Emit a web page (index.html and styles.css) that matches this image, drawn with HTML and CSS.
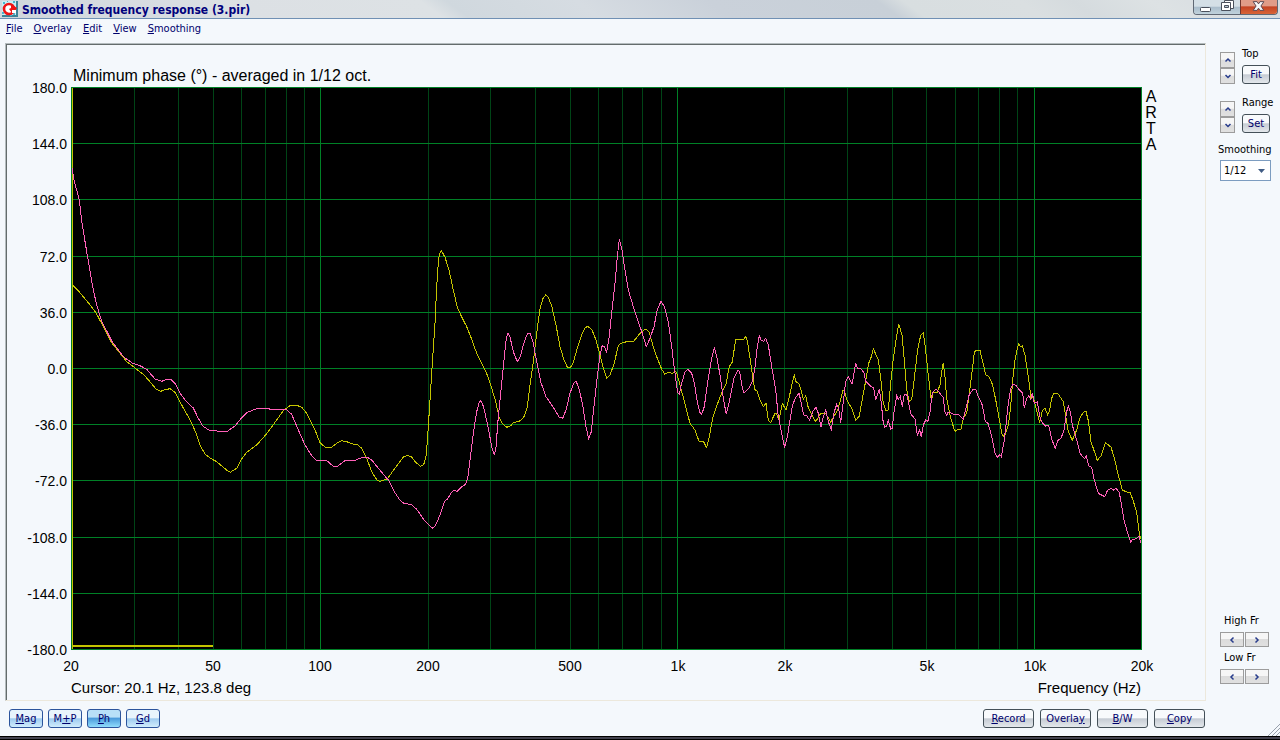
FILE: index.html
```html
<!DOCTYPE html>
<html lang="en">
<head>
<meta charset="utf-8">
<title>Smoothed frequency response (3.pir)</title>
<link rel="stylesheet" href="styles.css">
</head>
<body>
<div class="window">
  <header class="titlebar">
    <svg class="app-icon" viewBox="0 0 16 16" aria-hidden="true">
      <rect width="16" height="16" fill="#3c8296"/>
      <path d="M0 0h14v14H0z" fill="#c8eef4"/>
      <path d="M1 1h2v2H1zM11 0h2v2h-2zM0 11h2v2H0zM11 12h2v2h-2zM5 0h1v1H5zM8 14h2v1H8z" fill="#4cb4cc"/>
      <circle cx="7" cy="8" r="5" fill="#fff" stroke="#f01414" stroke-width="2.6"/>
      <path d="M9 3l6 4-2 3-3-1v3L7 8l2-1z" fill="#f01414"/>
      <path d="M10 9h4v3h-4z" fill="#fff"/>
    </svg>
    <h1 class="title">Smoothed frequency response (3.pir)</h1>
    <div class="window-controls">
      <button class="win-btn" aria-label="Minimize"><svg viewBox="0 0 23 14"><rect x="6.500" y="7.500" width="10" height="4" rx="1" fill="#fff" stroke="#4a505c"/></svg></button>
      <button class="win-btn win-restore" aria-label="Restore"><svg viewBox="0 0 23 14"><path d="M7.500 0.500h9v8h-9z" fill="#fff" stroke="#4a505c"/><path d="M4.500 2.500h9v8h-9z" fill="#fff" stroke="#4a505c"/><path d="M7.500 5.500h4v2h-4z" fill="#b8c8d4" stroke="#4a505c"/></svg></button>
      <button class="win-btn win-close" aria-label="Close"><svg viewBox="0 0 37 14"><path d="M12.500 1.500h4l1.500 2.300 1.500-2.300h4l-3 4.500 3 4.500h-4L18 8.200l-1.500 2.300h-4l3-4.500z" fill="#f6f6f8" stroke="#5a4650"/></svg></button>
    </div>
  </header>
  <nav class="menu">
    <a href="#file"><u>F</u>ile</a>
    <a href="#overlay"><u>O</u>verlay</a>
    <a href="#edit"><u>E</u>dit</a>
    <a href="#view"><u>V</u>iew</a>
    <a href="#smoothing"><u>S</u>moothing</a>
  </nav>
  <main class="workspace">
    <section class="panel">
      <svg class="chart" viewBox="7 45 1198 655" role="img" aria-label="Minimum phase chart">
        <rect class="plot-bg" x="71" y="87" width="1071" height="563"/>
        <path class="grid-minor" d="M134.500 87v563M178.500 87v563M213.500 87v563M241.500 87v563M265.500 87v563M286.500 87v563M304.500 87v563M428.500 87v563M490.500 87v563M535.500 87v563M570.500 87v563M598.500 87v563M622.500 87v563M642.500 87v563M661.500 87v563M784.500 87v563M847.500 87v563M892.500 87v563M926.500 87v563M955.500 87v563M978.500 87v563M999.500 87v563M1017.500 87v563"/>
        <path class="grid-major" d="M320.500 87v563M677.500 87v563M1034.500 87v563M71 143.500h1071M71 199.500h1071M71 256.500h1071M71 312.500h1071M71 368.500h1071M71 424.500h1071M71 480.500h1071M71 537.500h1071M71 593.500h1071M71.500 87.500h1070v562h-1070z"/>
        <path class="cursor" d="M72.500 88v561"/>
        <path class="marker" d="M72 646h141"/>
        <polyline class="trace-yellow" points="72,284.700 80,292.700 90,304.700 96,312.700 103.300,326.700 111.700,342.700 126.700,361.700 135,368 143.300,374.300 150,381.700 156,389 160.700,391.300 165,389.700 170,388.700 175,392.300 183.300,408 188.300,416.700 193.300,426.700 196.700,435 200,445 205,454 210,458 216.700,461.700 223.300,467.300 227.700,471 230.300,472.300 236.700,468.300 241.700,459 246.700,452.300 256.700,445 265,435.700 273.300,424.700 283.300,410.700 290,405.700 296.700,405.300 301.700,407.300 306.700,413.300 315,430 320,442.700 325,447 328.300,447.700 331.700,447.300 336.700,443.300 341.700,440.700 346.700,441.700 355,444.700 357.300,444.300 361.700,448.300 366.700,458.300 371.700,471.700 376.700,479.700 380,481.300 387.300,478.700 395,468.300 403.300,457 407.700,455.300 411.700,457 416,462.700 420.700,466.300 423.700,464.700 426.300,455 428.300,426.700 430,400 432.300,363.300 435,323.300 436.700,286.700 438,266.700 439.300,254 441.300,250.300 445,257.300 449,270 453.300,290 457.300,307.300 461.700,317 466.700,326.700 471.700,339.300 476.700,353.300 481.700,363 488.300,377.300 491.700,388.300 495.700,401.700 499,416.700 502.300,423.300 506.700,427.300 510.700,425.700 513.300,422.700 520.700,420.700 524.300,416 527.300,406.700 530,385 532.700,366.700 535.300,345 537.300,328.300 540,309.300 542.700,299 545.700,295 548.300,297.300 551.700,306 556,325 560,346.700 564,360 567.300,367 569.700,368 572.700,364.300 577.300,348.300 581.700,335 585,328 587.700,326.300 591.700,329.300 596,340 600,355 603.300,368.300 606.700,378.300 610,375 614,364 618.300,346 620.700,343.300 626.700,341.700 634,341 639.300,334 644,330 646,329 649,332 653.300,346.700 656.700,356.700 661.700,369.300 664.700,374 668.300,372.300 672.700,373.300 675.700,371.300 676.700,372.700 680,385 684,400 690,423.300 695,430 699.300,442 703.300,441.300 706.700,447.700 709.300,436.700 712.700,418.300 717.300,404.300 721.700,393 726,384 729.300,366.700 732.300,362 735.700,339.300 738.300,340 744,339 745.700,336.700 747.300,340.700 750,358.300 752.700,376.700 754.700,389.300 757.300,391.300 760,400 763.300,406.700 766,403.300 768.300,420 770.700,422.700 775,413.300 776.700,414 779,420 782.300,403.300 786,410 789,398.300 792.300,382.700 794.300,375.300 796,381.700 799.300,384 803.300,399 805.700,396 808.300,407.700 812.700,416.700 815.700,421.700 820.700,413.300 826,414 830.700,422 833.300,417.300 837.700,410 840,401.700 843,390 844.300,391 847.300,401 851.700,408.300 855.700,420.300 859.300,416 862.700,396.700 866,379.300 868.700,363.300 871.700,355.700 873.300,348.700 878.300,360 880.700,378.300 883.300,403.300 886,411 888.300,410 890.700,383.300 893.300,358.300 896.300,338.300 898.700,323.700 902,335 904.300,360 906.700,390 909.300,401.300 911.700,399.300 914.700,375 917.700,349.300 920.700,335.300 923.300,332.700 925.300,346.700 927.700,370 930,390 931.300,400.700 933.300,392 937.300,392 940,385 941.700,371.700 943.300,362.700 945,376.700 946.700,398.300 950,415 954.300,430 955.700,431.300 958,429 960.700,430 963.300,418.300 966.700,413.300 970,388.300 972.300,370 974.300,352.300 976,350.300 980,350.300 982.700,361.700 985.700,374.700 989,376.700 992.700,385 996.700,405 1000,423.300 1002,434 1004.300,437.700 1008.300,425 1010.700,406.700 1012.700,380 1015,360 1017.700,346.700 1018.700,343.700 1020.300,346.700 1022.300,346 1025,355 1028.300,376.700 1031,398.300 1033.300,397 1037.300,413.300 1039.700,422.700 1042.300,411 1045,408.300 1047.700,414.700 1049.300,411.700 1051.700,398.300 1053.700,393.300 1057.700,393.300 1063.300,401.700 1066,418.300 1068.300,431.300 1072.300,440.300 1076.700,430 1080,417.700 1083.300,412.300 1086,411.300 1088.300,420.700 1091,441.700 1095,453.300 1097.300,460.300 1101,456 1105.300,442.700 1111,447 1114.300,458.300 1118.300,475 1122.300,490 1126.700,492 1130.300,492.700 1133.300,501 1136.700,512.700 1139.300,533.300 1140.700,539.300"/>
        <polyline class="trace-pink" points="72,168.300 74,180 79.300,200 82,223.300 86.700,251.700 93.300,290 96.700,305 101.700,321.700 108.300,334 111.700,341 123.300,356.700 132.700,363.300 140,365.700 146.700,369.300 155,379 161.700,381.300 166.700,379.300 171,379.700 175,383.300 180,393.300 186,401 193.300,408 198.300,418.300 202.700,426 209.300,430.300 220,431.300 227.300,431.300 235,426 241.700,417.700 247.300,412.300 256.700,408.700 268.300,408.700 270.700,409.300 286,409.300 291.700,414.300 298.300,430 305,445 311.700,455.700 316.700,460.500 326.700,460.500 333.300,466.300 337.300,466.300 345,460.700 353.300,461 361.700,457.700 367.300,457.300 371.700,460 378.300,468.300 388.300,480 395,492.700 400,500.300 404.300,503.700 411,504.300 416.700,509.300 425,521.300 432.700,528.300 435.300,526 440,515 444.300,501.700 447.700,498.700 451.700,492 454,490.300 457.300,491.300 461.700,486.700 465.700,484.300 467.700,478.300 470,460 473.300,433.300 476.700,411.700 479.300,402 480.700,400.700 483.300,406 487.700,425 491.700,446.700 494.300,455.300 496,446.700 498.300,416.700 501.700,383.300 504.300,356.700 506.300,338.300 508,333.300 510,337 513.300,351.700 517.300,361.700 520,357.300 524.300,341.700 527.700,333 530,333 533.300,343.300 536.700,361.700 540.700,381.700 546,396.700 555,410 559.300,417.300 562.700,418.300 566,410 570,393.300 574,382.700 576,381.300 578.700,387.300 582.700,405 586,426.700 588.700,438.700 591.300,431.700 594.300,403.300 597.700,373.300 600,355 602.300,345.300 604.300,346.700 606.700,352.300 609,338.300 612,310 615,283.300 617.300,256.700 619.300,239.300 621.700,248.300 625,270 628.300,290 633.300,306.700 638.300,321.700 642.300,333.300 646.300,346.700 650,338.300 654,326.700 657.300,310 661,301.300 664.300,306.700 668.300,321.700 671.700,346.700 674.300,368.300 677.700,392.700 679.300,394 681.700,383.300 685,371.700 687.700,369.300 691.700,373.300 694.300,382.700 697.300,401.700 700,412.700 701.700,414.300 704.300,406.700 707.300,385 711,361.700 714.300,347.300 716.700,356.700 720,375 723.300,398.300 726.300,414.300 729.300,401.700 734,378.300 737.700,370.300 739.700,371.700 741.700,385 744,393.300 749.300,387.700 752.700,380.700 755,366.700 757.300,346.700 759.300,335.700 761,340 763.700,341.300 765.700,338.300 768.300,345 771.700,366.700 775.700,390 778.300,416.700 782.700,438.300 784.700,447.700 787.700,435 790,420 792.700,404.300 796,397.300 799,393 801,401.700 803.700,415 806.700,415.700 809.700,420.300 812.700,411.700 816,407.300 818.300,413.300 821,426.700 823.300,416.700 825.700,410 828.300,421.700 831.300,429.300 834.300,411.700 836.700,404.300 838.700,408.300 840.700,422.700 843.300,401.700 845.700,381.700 848.300,376.700 852,384 854,373.300 855.700,362.700 857.300,368 861.700,369.300 864,373.300 866,381.700 870,385.700 873.700,388 875.700,400 879.300,388.700 881.300,403.300 883.300,423.300 884.700,427.300 886.700,426 888.300,420.300 890.700,429 892.300,428.300 894,411.700 896.700,395.700 898.300,399.300 900.300,396.300 902.300,406.700 904.300,394 906.700,394 909,405 911,414.300 915,419 917.300,435.300 919.700,430 921.300,436.700 923.300,425 925.700,420 927.700,422 930,411.700 932.300,392.700 936,389.300 939,392 943.300,397.700 945,411.700 946.700,415.300 948.300,412 953.300,414 959,415 963.300,419 966,408.300 969.300,394.300 973.300,389.300 975.700,389.300 978.300,396.700 982.300,405 985.300,421.300 988,423.300 991.700,436 995,453.300 997.300,457.300 1000,454.700 1001.300,456.700 1004,441.700 1006,425 1008.300,403.300 1010.700,388.300 1012.700,384.300 1016,385.300 1019.300,390 1022.700,393.300 1024.300,408.300 1026.300,399.300 1028.700,395.700 1030.700,399.300 1032.300,392.700 1034.300,403.300 1037.300,401.700 1040,417.300 1042.300,422.700 1045.700,426 1048.700,425.300 1052,440 1055.300,448.300 1057.700,440.700 1061,438.300 1064,430 1066.700,411.700 1068.300,405.700 1070.300,411.700 1072.300,425 1076.700,440 1080,453.300 1084.300,458.700 1086.300,456 1088.700,465.700 1091.700,467.300 1094.300,480 1098.300,493.300 1104.700,496.700 1107.700,490 1111,488.300 1114,490.300 1116,488.300 1119.300,492.700 1121.300,503.300 1124,520 1127.300,531.700 1130.700,542.300 1132,539.700 1136,538.700 1139,536 1140.700,543.300"/>
        <text class="chart-title" x="73" y="81">Minimum phase (°) - averaged in 1/12 oct.</text>
        <g class="axis-y">
          <text x="67" y="93">180.0</text>
          <text x="67" y="149">144.0</text>
          <text x="67" y="205">108.0</text>
          <text x="67" y="262">72.0</text>
          <text x="67" y="318">36.0</text>
          <text x="67" y="374">0.0</text>
          <text x="67" y="430">-36.0</text>
          <text x="67" y="486">-72.0</text>
          <text x="67" y="543">-108.0</text>
          <text x="67" y="599">-144.0</text>
          <text x="67" y="655">-180.0</text>
        </g>
        <g class="axis-x">
          <text x="71" y="671">20</text>
          <text x="213" y="671">50</text>
          <text x="320" y="671">100</text>
          <text x="428" y="671">200</text>
          <text x="570" y="671">500</text>
          <text x="678" y="671">1k</text>
          <text x="785" y="671">2k</text>
          <text x="927" y="671">5k</text>
          <text x="1035" y="671">10k</text>
          <text x="1142" y="671">20k</text>
        </g>
        <g class="brand">
          <text x="1151" y="102">A</text>
          <text x="1151" y="118">R</text>
          <text x="1151" y="134">T</text>
          <text x="1151" y="150">A</text>
        </g>
        <text class="note" x="71" y="693">Cursor: 20.1 Hz, 123.8 deg</text>
        <text class="note note-end" x="1141" y="693">Frequency (Hz)</text>
      </svg>
    </section>
    <aside class="side">
      <div class="side-top">
        <div class="adjust">
          <div class="spinner">
            <button class="arrow" aria-label="Top up"><svg viewBox="0 0 8 8"><path d="M1.500 5.500L4 3l2.500 2.500"/></svg></button>
            <button class="arrow" aria-label="Top down"><svg viewBox="0 0 8 8"><path d="M1.500 3L4 5.500 6.500 3"/></svg></button>
          </div>
          <div class="adjust-main"><span>Top</span><button class="btn">Fit</button></div>
        </div>
        <div class="adjust">
          <div class="spinner">
            <button class="arrow" aria-label="Range up"><svg viewBox="0 0 8 8"><path d="M1.500 5.500L4 3l2.500 2.500"/></svg></button>
            <button class="arrow" aria-label="Range down"><svg viewBox="0 0 8 8"><path d="M1.500 3L4 5.500 6.500 3"/></svg></button>
          </div>
          <div class="adjust-main"><span>Range</span><button class="btn">Set</button></div>
        </div>
        <div class="smoothing">
          <label for="smoothing">Smoothing</label>
          <div class="select-wrap">
            <select id="smoothing"><option>1/12</option></select>
            <svg class="caret" viewBox="0 0 7 4" aria-hidden="true"><path d="M0 0h7L3.500 4z"/></svg>
          </div>
        </div>
      </div>
      <div class="side-bottom">
        <span>High Fr</span>
        <div class="pair">
          <button class="arrow" aria-label="High frequency down"><svg viewBox="0 0 8 8"><path d="M5.500 1.500L3 4l2.500 2.500"/></svg></button>
          <button class="arrow" aria-label="High frequency up"><svg viewBox="0 0 8 8"><path d="M2.500 1.500L5 4 2.500 6.500"/></svg></button>
        </div>
        <span>Low Fr</span>
        <div class="pair">
          <button class="arrow" aria-label="Low frequency down"><svg viewBox="0 0 8 8"><path d="M5.500 1.500L3 4l2.500 2.500"/></svg></button>
          <button class="arrow" aria-label="Low frequency up"><svg viewBox="0 0 8 8"><path d="M2.500 1.500L5 4 2.500 6.500"/></svg></button>
        </div>
      </div>
    </aside>
  </main>
  <footer class="toolbar">
    <div class="views">
      <button class="btn btn-view"><u>M</u>ag</button>
      <button class="btn btn-view">M<u>+</u>P</button>
      <button class="btn btn-view btn-active"><u>P</u>h</button>
      <button class="btn btn-view"><u>G</u>d</button>
    </div>
    <div class="actions">
      <button class="btn"><u>R</u>ecord</button>
      <button class="btn">Overla<u>y</u></button>
      <button class="btn"><u>B</u>/W</button>
      <button class="btn"><u>C</u>opy</button>
    </div>
    <svg class="grip" viewBox="0 0 12 12" aria-hidden="true"><path d="M0 12L12 0M4 12l8-8M8 12l4-4"/></svg>
  </footer>
</div>
</body>
</html>
```
FILE: styles.css
```css
* {
  box-sizing: border-box;
}

body {
  margin: 0;
  background: #f4f8fc;
  color: #000;
  font: 11px/14px "DejaVu Sans Condensed", "DejaVu Sans", sans-serif;
}

.window {
  display: flex;
  flex-direction: column;
  min-height: 100vh;
}

.window::after {
  content: "";
  height: 4px;
  background: linear-gradient(#000 0 25%, #42424e 25% 75%, #000 75%);
}

.titlebar {
  display: flex;
  align-items: center;
  gap: 4px;
  height: 19px;
  padding-left: 2px;
  border-bottom: 1px solid #7090b4;
  background: linear-gradient(36deg, #cfd6dc, #dce0e4 20%, #dde2e5 34%, #d0d8de 36%, #d6dce2 46%, #cad1da 56%, #c8d0d8 69%, #d8dee0 71%, #dadfe1 80%, #d5dbde 84%, #dde2e4 90%, #d6dbe0);
}

.app-icon {
  width: 16px;
  height: 16px;
}

.title {
  flex: 1;
  margin: 0;
  padding-top: 1px;
  color: #00007c;
  font-size: 12px;
  line-height: 18px;
}

.window-controls {
  display: flex;
  align-self: flex-start;
  margin-right: 2px;
  border: 1px solid #606874;
  border-top: 0;
  border-radius: 0 0 4px 4px;
  overflow: hidden;
}

.win-btn {
  width: 23px;
  height: 14px;
  padding: 0;
  border: 0;
  background: linear-gradient(#d4dfe6 45%, #a9bccb 50%, #c0d2dc);
}

.win-btn svg {
  display: block;
  width: 100%;
  height: 100%;
}

.win-close {
  width: 37px;
  border-left: 1px solid #703830;
  background: linear-gradient(#e09c88 40%, #c44424 50%, #d86438);
}

.menu {
  display: flex;
  gap: 11px;
  height: 24px;
  padding: 3px 6px;
}

.menu a {
  color: #00006c;
  text-decoration: none;
}

u {
  text-underline-offset: 1px;
}

.workspace {
  display: grid;
  grid-template-columns: 1fr 74px;
  flex: 1;
}

.panel {
  margin-left: 5px;
  padding: 1px 0 0 1px;
  border: 1px solid #ece8dc;
  border-top-color: #b4bcbe;
  border-left-color: #b4bcbe;
  box-shadow: inset 1px 1px 0 #646c6c;
}

.chart {
  display: block;
  width: 100%;
  font-family: "Liberation Sans", Arial, sans-serif;
  font-size: 14px;
}

.plot-bg {
  fill: #000;
}

.grid-minor,
.grid-major,
.cursor,
.marker,
.trace-yellow,
.trace-pink {
  fill: none;
  shape-rendering: crispEdges;
}

.grid-minor {
  stroke: #004416;
}

.grid-major {
  stroke: #008026;
}

.cursor,
.marker,
.trace-yellow {
  stroke: #c4c400;
}

.marker {
  stroke-width: 2px;
}

.trace-pink {
  stroke: #ff60b8;
}

.chart-title,
.brand {
  font-size: 16px;
}

.note {
  font-size: 15px;
}

.axis-y,
.note-end {
  text-anchor: end;
}

.axis-x,
.brand {
  text-anchor: middle;
}

.side {
  display: flex;
  flex-direction: column;
  justify-content: space-between;
  padding: 4px 0 17px 14px;
}

.side-top {
  display: flex;
  flex-direction: column;
  gap: 12px;
}

.adjust {
  display: flex;
  align-items: flex-end;
  gap: 7px;
}

.adjust-main {
  display: flex;
  flex-direction: column;
  gap: 4px;
}

.adjust-main .btn {
  width: 28px;
  padding: 0;
}

.spinner {
  display: flex;
  flex-direction: column;
}

.arrow {
  display: flex;
  align-items: center;
  justify-content: center;
  width: 15px;
  height: 16px;
  padding: 0;
  border: 1px solid #9c9c9c;
  background: linear-gradient(#f6f6f6 45%, #dcdcdc 50%, #e0e0e0);
}

.arrow svg {
  width: 8px;
  height: 8px;
  fill: none;
  stroke: #283c8c;
  stroke-width: 1.5;
}

.smoothing {
  display: flex;
  flex-direction: column;
  gap: 3px;
  margin-top: -2px;
  margin-left: -2px;
}

.select-wrap {
  display: grid;
  align-items: center;
  width: 51px;
  margin-left: 2px;
}

.select-wrap select,
.caret {
  grid-area: 1 / 1;
}

.select-wrap select {
  appearance: none;
  width: 100%;
  height: 21px;
  padding: 0 3px;
  border: 1px solid #7c9cc0;
  border-radius: 0;
  background: #fff;
  color: #000;
  font: inherit;
}

.caret {
  justify-self: end;
  width: 7px;
  height: 4px;
  margin-right: 6px;
  fill: #405c84;
  pointer-events: none;
}

.side-bottom {
  display: flex;
  flex-direction: column;
  gap: 4px;
}

.side-bottom span {
  padding-left: 4px;
}

.pair {
  display: flex;
  gap: 1px;
}

.pair .arrow {
  width: 24px;
  height: 15px;
}

.toolbar {
  display: grid;
  grid-template-columns: 1fr auto 64px 12px;
  align-items: center;
  height: 35px;
  padding-left: 9px;
}

.views {
  display: flex;
  gap: 5px;
}

.actions {
  display: flex;
  gap: 6px;
  margin-right: -1px;
}

.btn {
  width: 51px;
  height: 19px;
  padding: 0;
  border: 1px solid #445058;
  border-radius: 3px;
  background: linear-gradient(#f8fafc 45%, #c6ccd4 52%, #e4e8ec);
  color: #00006c;
  font: inherit;
}

.btn-view {
  width: 34px;
  border-color: #2c549c;
  background: linear-gradient(#e8f4fc 45%, #a0ccf0 52%, #d0ecfc);
}

.btn-active {
  background: linear-gradient(#b8e0f8 40%, #4c9cdc 50%, #90dcfc);
}

.grip {
  grid-column: 4;
  align-self: end;
  width: 12px;
  height: 12px;
  fill: none;
  stroke: #98a0ac;
}
```
